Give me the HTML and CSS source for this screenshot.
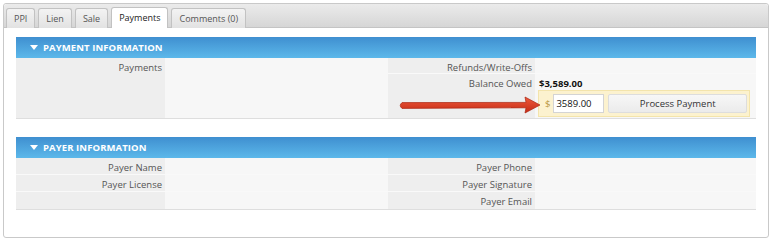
FILE: index.html
```html
<!DOCTYPE html>
<html lang="en">
<head>
    <meta charset="UTF-8">
    <title>Payments</title>
    <link rel="stylesheet" href="styles.css">
</head>
<body>
<div class="frame">
    <div class="tabbar">
        <a href="#" class="tab">PPI</a>
        <a href="#" class="tab">Lien</a>
        <a href="#" class="tab">Sale</a>
        <a href="#" class="tab tab--active">Payments</a>
        <a href="#" class="tab">Comments (0)</a>
    </div>

    <div class="panel">
        <section class="box">
            <h2 class="box__head"><span class="box__caret"></span>Payment Information</h2>
            <div class="box__grid box__grid--payment">
                <div class="cell cell--label cell--tall">Payments</div>
                <div class="cell cell--value cell--tall"></div>
                <div class="cell cell--label">Refunds/Write-Offs</div>
                <div class="cell cell--value"></div>
                <div class="cell cell--label">Balance Owed</div>
                <div class="cell cell--value"><b>$3,589.00</b></div>
                <div class="cell cell--label"></div>
                <div class="cell cell--value cell--pay">
                    <div class="pay">
                        <span class="pay__sign">$</span>
                        <input class="pay__input" type="text" value="3589.00">
                        <button class="pay__btn" type="button">Process Payment</button>
                    </div>
                </div>
            </div>
        </section>

        <section class="box">
            <h2 class="box__head"><span class="box__caret"></span>Payer Information</h2>
            <div class="box__grid box__grid--payer">
                <div class="cell cell--label">Payer Name</div>
                <div class="cell cell--value"></div>
                <div class="cell cell--label">Payer Phone</div>
                <div class="cell cell--value"></div>
                <div class="cell cell--label">Payer License</div>
                <div class="cell cell--value"></div>
                <div class="cell cell--label">Payer Signature</div>
                <div class="cell cell--value"></div>
                <div class="cell cell--label"></div>
                <div class="cell cell--value"></div>
                <div class="cell cell--label">Payer Email</div>
                <div class="cell cell--value"></div>
            </div>
        </section>
    </div>

    <!-- callout arrow pointing at the amount field -->
    <svg class="callout" width="146" height="20" viewBox="0 0 146 20">
        <defs>
            <linearGradient id="arrow-fill" x1="0" y1="0" x2="0" y2="1">
                <stop offset="0" stop-color="#ee5a3c"/>
                <stop offset="1" stop-color="#c52a14"/>
            </linearGradient>
        </defs>
        <path d="M5 7.6 L129 7.4 L128 2 L143 10 L128 18 L129 12.8 L5 13.4 Q1.5 10.5 5 7.6 Z"
              fill="url(#arrow-fill)" stroke="#a92410" stroke-width="0.7"/>
    </svg>
</div>
</body>
</html>
```

FILE: styles.css
```css
body {
    margin: 0;
    font-family: "Open Sans", "DejaVu Sans", sans-serif;
    font-size: 9.5px;
    color: #555;
    background: #fff;
}

.frame {
    position: relative;
    margin: 3px 0 0 3px;
    width: 764px;
    height: 233px;
    border: 1px solid #c9c9c9;
    border-radius: 3px;
    background: #fff;
}

.tabbar {
    display: flex;
    align-items: flex-end;
    gap: 3px;
    height: 23px;
    padding: 0 0 0 2px;
    background: linear-gradient(#ebebeb, #d6d6d6);
    border-bottom: 1px solid #c4c4c4;
    border-radius: 3px 3px 0 0;
}

.tab {
    display: block;
    height: 19px;
    line-height: 19px;
    padding: 0 7px;
    margin-bottom: -1px;
    border: 1px solid #c2c2c2;
    border-bottom: none;
    border-radius: 3px 3px 0 0;
    background: linear-gradient(#f3f3f3, #e2e2e2);
    color: #555;
    font-size: 9px;
    text-decoration: none;
}

.tab--active {
    height: 20px;
    background: #fff;
    color: #222;
}

.panel {
    padding: 9px 12px 0;
}

.box {
    margin-bottom: 18px;
    border-bottom: 1px solid #dedede;
}

.box__head {
    display: flex;
    align-items: center;
    height: 21px;
    margin: 0;
    padding-left: 14px;
    background: linear-gradient(#3f8fd0, #5cb8ea);
    color: #fff;
    font-size: 9.5px;
    font-weight: bold;
    text-transform: uppercase;
    letter-spacing: 0.1px;
}

.box__caret {
    width: 0;
    height: 0;
    margin-right: 5px;
    border-left: 4px solid transparent;
    border-right: 4px solid transparent;
    border-top: 5px solid #fff;
}

.box__grid {
    display: grid;
    grid-template-columns: 149px 223px 147px 1fr;
}

.box__grid--payment {
    grid-template-rows: 16px 16px 28px;
}

.box__grid--payer {
    grid-template-rows: 17px 17px 17px;
}

.cell {
    padding-top: 2px;
    line-height: 16px;
    border-bottom: 1px solid #f9f9f9;
}

.cell--label {
    padding-right: 3px;
    text-align: right;
    background: #eeeeee;
}

.cell--value {
    padding-left: 4px;
    background: #f7f7f7;
    color: #111;
}

.cell--tall {
    grid-row: span 3;
    border-bottom: none;
}

.box__grid > .cell:nth-last-child(-n+4) {
    border-bottom: none;
}

.cell--pay {
    padding: 0 6px 1px 3px;
}

.pay {
    display: flex;
    align-items: center;
    height: 25px;
    padding: 0 2px 0 6px;
    background: #fcf2cf;
    border: 1px solid #f3e4ac;
}

.pay__sign {
    color: #b9973f;
    margin-right: 3px;
}

.pay__input {
    width: 47px;
    height: 17px;
    padding: 0 0 0 2px;
    margin: 0 4px 0 0;
    border: 1px solid #d4d4d4;
    font: inherit;
    color: #111;
}

.pay__btn {
    flex: 1;
    height: 19px;
    padding: 0;
    border: 1px solid #ddd;
    border-radius: 2px;
    background: linear-gradient(#f7f7f7, #ebebeb);
    font: inherit;
    color: #333;
}

.callout {
    position: absolute;
    left: 393px;
    top: 91px;
}
```
